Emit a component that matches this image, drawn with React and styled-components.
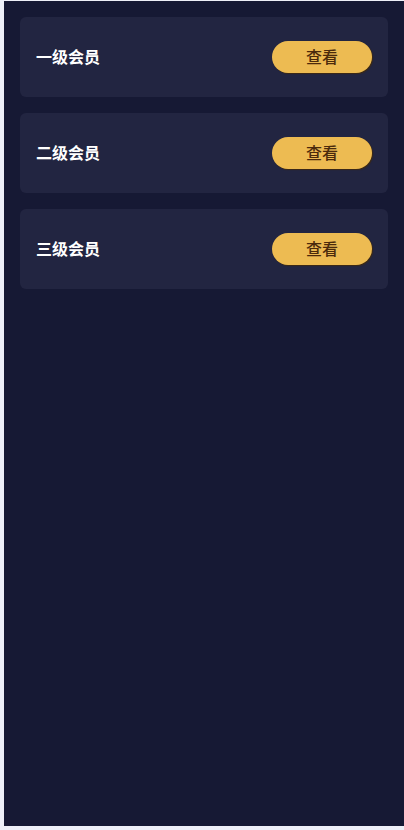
import styled, { createGlobalStyle } from "styled-components";

const GlobalStyle = createGlobalStyle`
  html, body {
    margin: 0;
    padding: 0;
    background: #eef0f8;
  }
  body {
    font-family: "Noto Sans CJK SC", "Noto Sans", sans-serif;
  }
`;

const Page = styled.div`
  margin: 1px 0 0 4px;
  height: 825px;
  background-color: #161934;
  padding: 16px;
  box-sizing: border-box;
  display: flex;
  flex-direction: column;
  gap: 16px;
`;

const Card = styled.div`
  height: 80px;
  box-sizing: border-box;
  background-color: #222541;
  border-radius: 6px;
  padding: 0 16px 1px;
  display: flex;
  align-items: center;
  justify-content: space-between;
`;

const Label = styled.span`
  color: #ffffff;
  font-size: 16px;
  font-weight: 700;
  line-height: 20px;
  margin-bottom: 1px;
`;

const Button = styled.button`
  width: 100px;
  height: 32px;
  border: none;
  border-radius: 16px;
  background-color: #edbb52;
  box-shadow: 1px 1px 1px #3d2a14;
  color: #4b2a0c;
  font-family: "Noto Sans CJK SC", "Noto Sans", sans-serif;
  font-size: 16px;
  font-weight: 500;
  line-height: 30px;
  cursor: pointer;
  padding: 0 0 2px;
`;

const levels = ["一级会员", "二级会员", "三级会员"];

function App() {
  return (
    <>
      <GlobalStyle />
      <Page>
        {levels.map((name) => (
          <Card key={name}>
            <Label>{name}</Label>
            <Button>查看</Button>
          </Card>
        ))}
      </Page>
    </>
  );
}

export default App;
